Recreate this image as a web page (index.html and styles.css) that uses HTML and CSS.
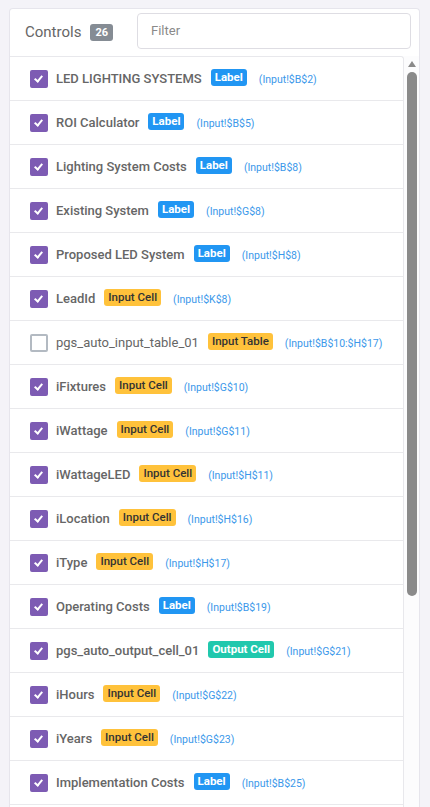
FILE: index.html
```html
<!DOCTYPE html>
<html>
<head>
<meta charset="utf-8">
<link rel="stylesheet" href="styles.css">
</head>
<body>
<div class="card">
  <div class="header">
    <div class="title">Controls <span class="count">26</span></div>
    <div class="filter">Filter</div>
  </div>
  <div class="body">
    <div class="list">
      <div class="row"><span class="cb on"></span><span class="name">LED LIGHTING SYSTEMS</span><span class="tag label">Label</span><span class="ref">(Input!$B$2)</span></div>
      <div class="row"><span class="cb on"></span><span class="name">ROI Calculator</span><span class="tag label">Label</span><span class="ref">(Input!$B$5)</span></div>
      <div class="row"><span class="cb on"></span><span class="name">Lighting System Costs</span><span class="tag label">Label</span><span class="ref">(Input!$B$8)</span></div>
      <div class="row"><span class="cb on"></span><span class="name">Existing System</span><span class="tag label">Label</span><span class="ref">(Input!$G$8)</span></div>
      <div class="row"><span class="cb on"></span><span class="name">Proposed LED System</span><span class="tag label">Label</span><span class="ref">(Input!$H$8)</span></div>
      <div class="row"><span class="cb on"></span><span class="name">LeadId</span><span class="tag input">Input Cell</span><span class="ref">(Input!$K$8)</span></div>
      <div class="row"><span class="cb"></span><span class="name off">pgs_auto_input_table_01</span><span class="tag input">Input Table</span><span class="ref">(Input!$B$10:$H$17)</span></div>
      <div class="row"><span class="cb on"></span><span class="name">iFixtures</span><span class="tag input">Input Cell</span><span class="ref">(Input!$G$10)</span></div>
      <div class="row"><span class="cb on"></span><span class="name">iWattage</span><span class="tag input">Input Cell</span><span class="ref">(Input!$G$11)</span></div>
      <div class="row"><span class="cb on"></span><span class="name">iWattageLED</span><span class="tag input">Input Cell</span><span class="ref">(Input!$H$11)</span></div>
      <div class="row"><span class="cb on"></span><span class="name">iLocation</span><span class="tag input">Input Cell</span><span class="ref">(Input!$H$16)</span></div>
      <div class="row"><span class="cb on"></span><span class="name">iType</span><span class="tag input">Input Cell</span><span class="ref">(Input!$H$17)</span></div>
      <div class="row"><span class="cb on"></span><span class="name">Operating Costs</span><span class="tag label">Label</span><span class="ref">(Input!$B$19)</span></div>
      <div class="row"><span class="cb on"></span><span class="name">pgs_auto_output_cell_01</span><span class="tag output">Output Cell</span><span class="ref">(Input!$G$21)</span></div>
      <div class="row"><span class="cb on"></span><span class="name">iHours</span><span class="tag input">Input Cell</span><span class="ref">(Input!$G$22)</span></div>
      <div class="row"><span class="cb on"></span><span class="name">iYears</span><span class="tag input">Input Cell</span><span class="ref">(Input!$G$23)</span></div>
      <div class="row"><span class="cb on"></span><span class="name">Implementation Costs</span><span class="tag label">Label</span><span class="ref">(Input!$B$25)</span></div>
    </div>
    <div class="scroll">
      <span class="arrow"></span>
      <span class="thumb"></span>
    </div>
  </div>
</div>
</body>
</html>
```
FILE: styles.css
```css
html, body {
  margin: 0;
  height: 807px;
  overflow: hidden;
}
body {
  background: #f4f3f8;
  font-family: Roboto, "Liberation Sans", sans-serif;
  padding: 8px 10px 0 9px;
  box-sizing: border-box;
}
.card {
  background: #fff;
  border: 1px solid #e6e5ec;
  border-bottom: none;
  border-radius: 4px 4px 0 0;
  height: 799px;
  display: flex;
  flex-direction: column;
  overflow: hidden;
}
.header {
  height: 47px;
  display: flex;
  align-items: center;
  padding: 0 8px 0 15px;
  flex-shrink: 0;
}
.title {
  font-size: 15px;
  color: #666;
  display: flex;
  align-items: center;
  width: 112px;
  margin-top: -1px;
}
.count {
  background: #858c94;
  color: #fff;
  font-size: 11px;
  font-weight: 700;
  border-radius: 3px;
  padding: 0 5px;
  height: 17px;
  line-height: 17px;
  margin-left: 9px;
}
.filter {
  flex: 1;
  height: 34px;
  border: 1px solid #dedde3;
  border-radius: 4px;
  font-size: 13px;
  color: #8a8a8a;
  display: flex;
  align-items: center;
  padding-left: 13px;
  margin-top: -4px;
}
.body {
  flex: 1;
  display: flex;
  min-height: 0;
}
.list {
  flex: 1;
  border: 1px solid #e8e8ec;
  border-left: none;
  border-bottom: none;
  border-radius: 0 3px 0 0;
  overflow: hidden;
}
.row {
  height: 43px;
  border-bottom: 1px solid #e9e9ec;
  display: flex;
  align-items: center;
  padding-left: 20px;
  white-space: nowrap;
}
.cb {
  width: 18px;
  height: 18px;
  box-sizing: border-box;
  border: 2px solid #b3bac2;
  border-radius: 2px;
  margin-right: 8px;
  flex-shrink: 0;
  position: relative;
}
.cb.on {
  background: #7d5bb3;
  border-color: #7d5bb3;
}
.cb.on::after {
  content: "";
  position: absolute;
  left: 4px;
  top: 2px;
  width: 3px;
  height: 6px;
  border: solid #fff;
  border-width: 0 2px 2px 0;
  transform: rotate(40deg);
}
.name {
  font-size: 13px;
  font-weight: 500;
  color: #666;
}
.name.off {
  font-weight: 400;
}
.tag {
  font-size: 11.5px;
  font-weight: 700;
  border-radius: 3px;
  padding: 0 4px;
  height: 17px;
  line-height: 17px;
  margin-left: 9px;
  margin-bottom: 3px;
}
.tag.label {
  background: #2196f3;
  color: #fff;
}
.tag.input {
  background: #ffc23b;
  color: #333;
  font-weight: 500;
}
.tag.output {
  background: #21c8ad;
  color: #fff;
}
.ref {
  font-size: 10.5px;
  color: #3b98ea;
  margin-left: 12px;
  margin-top: 1px;
}
.scroll {
  width: 15px;
  display: flex;
  flex-direction: column;
  align-items: center;
  background: #fcfcfd;
  flex-shrink: 0;
}
.arrow {
  width: 0;
  height: 0;
  border-left: 4px solid transparent;
  border-right: 4px solid transparent;
  border-bottom: 6px solid #8a8a8a;
  margin-top: 5px;
}
.thumb {
  width: 10px;
  height: 524px;
  background: #8a8a8a;
  border-radius: 5px;
  margin-top: 5px;
}
```
